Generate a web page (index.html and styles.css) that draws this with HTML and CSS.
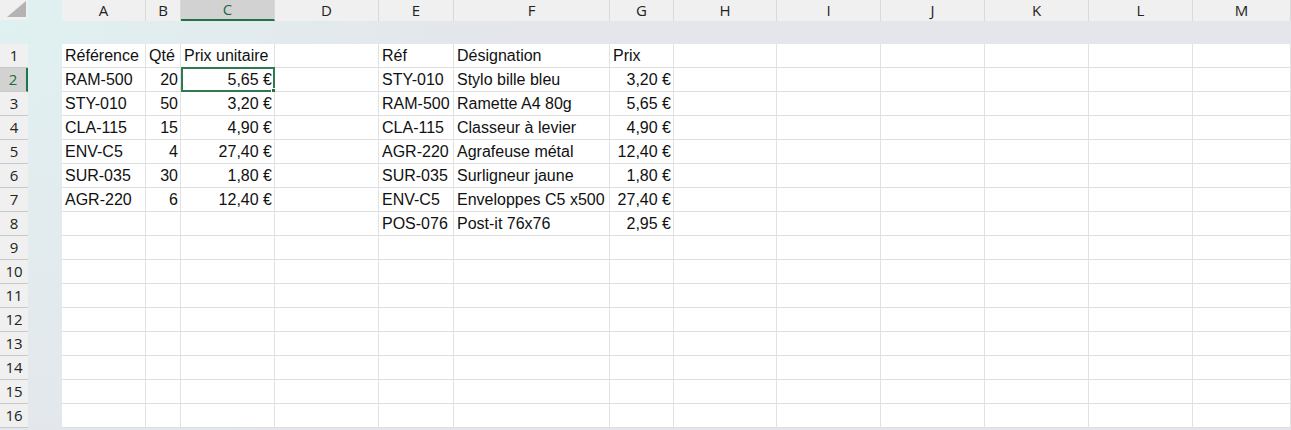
FILE: index.html
```html
<!DOCTYPE html>
<html lang="fr">
<head>
<meta charset="utf-8">
<title>Feuille</title>
<link rel="stylesheet" href="styles.css">
</head>
<body>
<div class="sheet">
  <div class="r hdr">
    <div class="corner"><svg width="28" height="20" viewBox="0 0 28 20"><polygon points="26,1 26,17 7,17" fill="#b3b3b3"/></svg></div>
    <div class="band"></div>
    <div class="ch">A</div><div class="ch">B</div><div class="ch sel">C</div><div class="ch">D</div><div class="ch">E</div><div class="ch">F</div><div class="ch">G</div><div class="ch">H</div><div class="ch">I</div><div class="ch">J</div><div class="ch">K</div><div class="ch">L</div><div class="ch">M</div>
  </div>
  <div class="bandrow"></div>
  <div class="r"><div class="rh">1</div><div class="band"></div><div class="c">Référence</div><div class="c">Qté</div><div class="c">Prix unitaire</div><div class="c"></div><div class="c">Réf</div><div class="c">Désignation</div><div class="c">Prix</div><div class="c"></div><div class="c"></div><div class="c"></div><div class="c"></div><div class="c"></div><div class="c"></div></div>
  <div class="r"><div class="rh sel">2</div><div class="band"></div><div class="c">RAM-500</div><div class="c n">20</div><div class="c n active">5,65 €<span class="handle"></span></div><div class="c"></div><div class="c">STY-010</div><div class="c">Stylo bille bleu</div><div class="c n">3,20 €</div><div class="c"></div><div class="c"></div><div class="c"></div><div class="c"></div><div class="c"></div><div class="c"></div></div>
  <div class="r"><div class="rh">3</div><div class="band"></div><div class="c">STY-010</div><div class="c n">50</div><div class="c n">3,20 €</div><div class="c"></div><div class="c">RAM-500</div><div class="c">Ramette A4 80g</div><div class="c n">5,65 €</div><div class="c"></div><div class="c"></div><div class="c"></div><div class="c"></div><div class="c"></div><div class="c"></div></div>
  <div class="r"><div class="rh">4</div><div class="band"></div><div class="c">CLA-115</div><div class="c n">15</div><div class="c n">4,90 €</div><div class="c"></div><div class="c">CLA-115</div><div class="c">Classeur à levier</div><div class="c n">4,90 €</div><div class="c"></div><div class="c"></div><div class="c"></div><div class="c"></div><div class="c"></div><div class="c"></div></div>
  <div class="r"><div class="rh">5</div><div class="band"></div><div class="c">ENV-C5</div><div class="c n">4</div><div class="c n">27,40 €</div><div class="c"></div><div class="c">AGR-220</div><div class="c">Agrafeuse métal</div><div class="c n">12,40 €</div><div class="c"></div><div class="c"></div><div class="c"></div><div class="c"></div><div class="c"></div><div class="c"></div></div>
  <div class="r"><div class="rh">6</div><div class="band"></div><div class="c">SUR-035</div><div class="c n">30</div><div class="c n">1,80 €</div><div class="c"></div><div class="c">SUR-035</div><div class="c">Surligneur jaune</div><div class="c n">1,80 €</div><div class="c"></div><div class="c"></div><div class="c"></div><div class="c"></div><div class="c"></div><div class="c"></div></div>
  <div class="r"><div class="rh">7</div><div class="band"></div><div class="c">AGR-220</div><div class="c n">6</div><div class="c n">12,40 €</div><div class="c"></div><div class="c">ENV-C5</div><div class="c">Enveloppes C5 x500</div><div class="c n">27,40 €</div><div class="c"></div><div class="c"></div><div class="c"></div><div class="c"></div><div class="c"></div><div class="c"></div></div>
  <div class="r"><div class="rh">8</div><div class="band"></div><div class="c"></div><div class="c"></div><div class="c"></div><div class="c"></div><div class="c">POS-076</div><div class="c">Post-it 76x76</div><div class="c n">2,95 €</div><div class="c"></div><div class="c"></div><div class="c"></div><div class="c"></div><div class="c"></div><div class="c"></div></div>
  <div class="r"><div class="rh">9</div><div class="band"></div><div class="c"></div><div class="c"></div><div class="c"></div><div class="c"></div><div class="c"></div><div class="c"></div><div class="c"></div><div class="c"></div><div class="c"></div><div class="c"></div><div class="c"></div><div class="c"></div><div class="c"></div></div>
  <div class="r"><div class="rh">10</div><div class="band"></div><div class="c"></div><div class="c"></div><div class="c"></div><div class="c"></div><div class="c"></div><div class="c"></div><div class="c"></div><div class="c"></div><div class="c"></div><div class="c"></div><div class="c"></div><div class="c"></div><div class="c"></div></div>
  <div class="r"><div class="rh">11</div><div class="band"></div><div class="c"></div><div class="c"></div><div class="c"></div><div class="c"></div><div class="c"></div><div class="c"></div><div class="c"></div><div class="c"></div><div class="c"></div><div class="c"></div><div class="c"></div><div class="c"></div><div class="c"></div></div>
  <div class="r"><div class="rh">12</div><div class="band"></div><div class="c"></div><div class="c"></div><div class="c"></div><div class="c"></div><div class="c"></div><div class="c"></div><div class="c"></div><div class="c"></div><div class="c"></div><div class="c"></div><div class="c"></div><div class="c"></div><div class="c"></div></div>
  <div class="r"><div class="rh">13</div><div class="band"></div><div class="c"></div><div class="c"></div><div class="c"></div><div class="c"></div><div class="c"></div><div class="c"></div><div class="c"></div><div class="c"></div><div class="c"></div><div class="c"></div><div class="c"></div><div class="c"></div><div class="c"></div></div>
  <div class="r"><div class="rh">14</div><div class="band"></div><div class="c"></div><div class="c"></div><div class="c"></div><div class="c"></div><div class="c"></div><div class="c"></div><div class="c"></div><div class="c"></div><div class="c"></div><div class="c"></div><div class="c"></div><div class="c"></div><div class="c"></div></div>
  <div class="r"><div class="rh">15</div><div class="band"></div><div class="c"></div><div class="c"></div><div class="c"></div><div class="c"></div><div class="c"></div><div class="c"></div><div class="c"></div><div class="c"></div><div class="c"></div><div class="c"></div><div class="c"></div><div class="c"></div><div class="c"></div></div>
  <div class="r"><div class="rh">16</div><div class="band"></div><div class="c"></div><div class="c"></div><div class="c"></div><div class="c"></div><div class="c"></div><div class="c"></div><div class="c"></div><div class="c"></div><div class="c"></div><div class="c"></div><div class="c"></div><div class="c"></div><div class="c"></div></div>
</div>
</body>
</html>
```

FILE: styles.css
```css
html, body {
  margin: 0;
  padding: 0;
  overflow: hidden;
}
body {
  width: 1291px;
  height: 430px;
  background: radial-gradient(circle at 0 0, #dff1f1 0, #e2ecef 200px, #e4e6eb 520px);
  font-family: "Liberation Sans", Arial, sans-serif;
  color: #111;
}
.sheet {
  display: flex;
  flex-direction: column;
}
.r {
  display: grid;
  grid-template-columns: 28px 34px 84px 35px 94px 104px 75px 156px 64px 103px 104px 104px 104px 104px 98px;
  height: 24px;
}
.r.hdr {
  height: 20px;
}
.bandrow {
  height: 24px;
}
.corner {
  background: #f0f0f0;
  height: 20px;
}
.corner svg { display: block; }
.band {
  background: transparent;
}
.ch {
  background: #f0f0f0;
  border-right: 1px solid #d9d9d9;
  box-sizing: border-box;
  text-align: center;
  font-family: "Open Sans", "Noto Sans", sans-serif;
  font-size: 15px;
  line-height: 20px;
  color: #222;
}
.ch.sel {
  background: #d2d2d2;
  color: #1c6b40;
  border-bottom: 2px solid #217346;
  line-height: 19px;
}
.rh {
  background: #f0f0f0;
  border-bottom: 1px solid #c9c9c9;
  box-sizing: border-box;
  height: 24px;
  text-align: center;
  font-family: "Open Sans", "Noto Sans", sans-serif;
  font-size: 15px;
  line-height: 23px;
  color: #222;
}
.rh.sel {
  background: #d2d2d2;
  color: #1c6b40;
  border-right: 2px solid #217346;
}
.c {
  position: relative;
  background: #fff;
  border-right: 1px solid #e2e2e2;
  border-bottom: 1px solid #dedede;
  box-sizing: border-box;
  height: 24px;
  font-size: 16px;
  line-height: 22px;
  padding: 1px 2px 0 3px;
  white-space: nowrap;
  overflow: visible;
}
.c.n {
  text-align: right;
  padding-right: 2px;
}
.c.active {
  box-shadow: inset 0 0 0 2px #2f7a50;
  margin-top: -1px;
  line-height: 24px;
  height: 25px;
  border: 0;
  padding-top: 1px;
  padding-right: 3px;
}
.handle {
  position: absolute;
  right: -3px;
  bottom: -3px;
  width: 5px;
  height: 5px;
  background: #217346;
  border: 1px solid #fff;
}
```
